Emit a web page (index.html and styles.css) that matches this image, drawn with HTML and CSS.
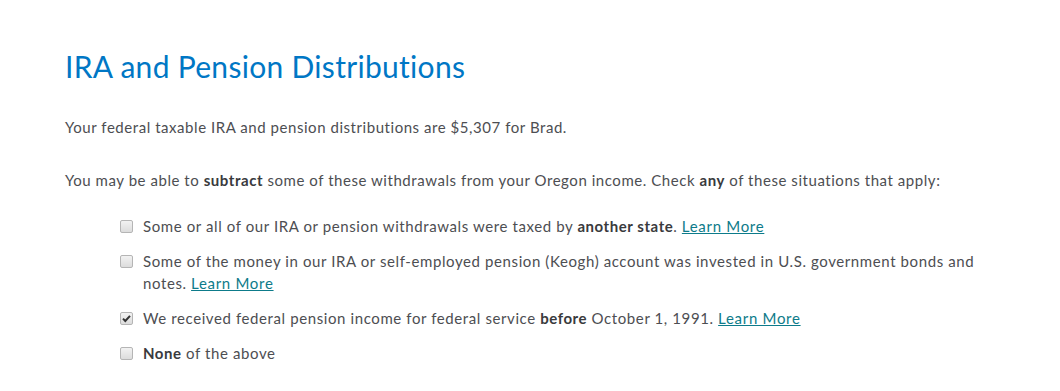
FILE: index.html
```html
<!DOCTYPE html>
<html>
<head>
<meta charset="utf-8">
<link rel="stylesheet" href="styles.css">
</head>
<body>
<main class="page">
  <h1 class="title">IRA and Pension Distributions</h1>
  <p class="text first">Your federal taxable IRA and pension distributions are $5,307 for Brad.</p>
  <p class="text">You may be able to <b>subtract</b> some of these withdrawals from your Oregon income. Check <b>any</b> of these situations that apply:</p>
  <ul class="options">
    <li class="option"><span class="box"></span><span class="label">Some or all of our IRA or pension withdrawals were taxed by <b>another state</b>. <a class="link" href="#">Learn More</a></span></li>
    <li class="option"><span class="box"></span><span class="label">Some of the money in our IRA or self-employed pension (Keogh) account was invested in U.S. government bonds and notes. <a class="link" href="#">Learn More</a></span></li>
    <li class="option"><span class="box checked"><svg viewBox="0 0 13 13" width="13" height="13"><path d="M3 6.6 L5.3 9 L10 3.8" fill="none" stroke="#333" stroke-width="2"/></svg></span><span class="label">We received federal pension income for federal service <b>before</b> October 1, 1991. <a class="link" href="#">Learn More</a></span></li>
    <li class="option"><span class="box"></span><span class="label"><b>None</b> of the above</span></li>
  </ul>
</main>
</body>
</html>
```
FILE: styles.css
```css
html, body { margin: 0; padding: 0; background: #fff; }
body { font-family: "Lato", "Liberation Sans", sans-serif; color: #393a3d; }
.page { padding: 44px 0 0 65px; }
.title { margin: 0; font-weight: 400; font-size: 30px; line-height: 44px; color: #0077c5; letter-spacing: 0.3px; }
.text { margin: 0; font-size: 15px; line-height: 22px; font-weight: 400; color: #4d4e52; letter-spacing: 0.55px; }
.text.first { margin-top: 28px; margin-bottom: 31px; }
.text b, .label b { font-weight: 700; color: #393a3d; letter-spacing: 0.55px; }
.options { list-style: none; margin: 24px 0 0 55px; padding: 0; }
.option { display: flex; align-items: flex-start; margin-bottom: 13px; font-size: 15px; line-height: 22px; color: #4d4e52; letter-spacing: 0.6px; }
.label { max-width: 860px; }
.box { flex: none; width: 11px; height: 11px; border: 1px solid #b5b5b5; border-radius: 2px; background: linear-gradient(#f2f2f2, #dcdcdc); margin: 5px 10px 0 0; position: relative; }
.box svg { position: absolute; left: -1px; top: -1px; }
.link { color: #0d7b8a; text-decoration: underline; font-weight: 400; letter-spacing: 0.7px; }
```
